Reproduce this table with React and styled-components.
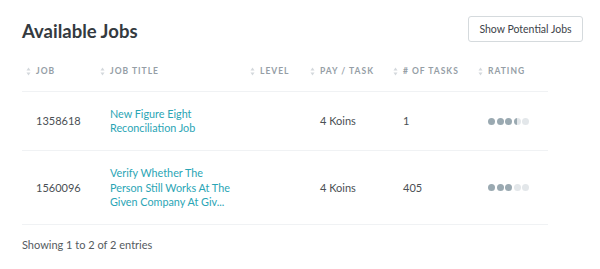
import React from 'react'
import styled, { createGlobalStyle } from 'styled-components'

const GlobalStyle = createGlobalStyle`
  body {
    margin: 0;
    background: #fff;
    font-family: Lato, "Open Sans", sans-serif;
  }
`

const jobs = [
  { id: '1358618', title: 'New Figure Eight Reconciliation Job', pay: '4 Koins', tasks: '1', rating: 3.5 },
  { id: '1560096', title: 'Verify Whether The Person Still Works At The Given Company At Giv...', pay: '4 Koins', tasks: '405', rating: 3 },
]

const columns = [
  { label: 'Job', width: 74 },
  { label: 'Job Title', width: 150 },
  { label: 'Level', width: 60 },
  { label: 'Pay / Task', width: 83 },
  { label: '# of Tasks', width: 85 },
  { label: 'Rating', width: 74 },
]

function SortIcon() {
  return (
    <svg width="5" height="9" viewBox="0 0 5 9">
      <path d="M2.5 0.5 L4.5 3.5 H0.5 Z" fill="#d3d8dc" />
      <path d="M2.5 8.5 L4.5 5.5 H0.5 Z" fill="#d3d8dc" />
    </svg>
  )
}

function Rating({ value }) {
  return (
    <Dots>
      {[0, 1, 2, 3, 4].map(i => {
        const fill = value - i >= 1 ? 'full' : value - i > 0 ? 'half' : 'empty'
        return <Dot key={i} $fill={fill} />
      })}
    </Dots>
  )
}

export default function App() {
  return (
    <>
      <GlobalStyle />
      <Page>
        <Header>
          <Title>Available Jobs</Title>
          <Button>Show Potential Jobs</Button>
        </Header>
        <Table>
          <colgroup>
            {columns.map(c => <col key={c.label} style={{ width: c.width }} />)}
          </colgroup>
          <thead>
            <tr>
              {columns.map(c => (
                <Th key={c.label}>
                  <ThInner>
                    <SortIcon />
                    {c.label}
                  </ThInner>
                </Th>
              ))}
            </tr>
          </thead>
          <tbody>
            {jobs.map(job => (
              <tr key={job.id}>
                <Td>{job.id}</Td>
                <Td><JobLink>{job.title}</JobLink></Td>
                <Td></Td>
                <Td>{job.pay}</Td>
                <Td>{job.tasks}</Td>
                <Td><Rating value={job.rating} /></Td>
              </tr>
            ))}
          </tbody>
        </Table>
        <Footer>Showing 1 to 2 of 2 entries</Footer>
      </Page>
    </>
  )
}

const Page = styled.div`
  padding: 16px 17px 0 22px;
  width: 600px;
  box-sizing: border-box;
`
const Header = styled.div`
  display: flex;
  justify-content: space-between;
  align-items: flex-start;
`
const Title = styled.h1`
  margin: 4px 0 0;
  font-size: 18.5px;
  font-weight: 700;
  color: #343a40;
  line-height: 22px;
`
const Button = styled.button`
  height: 26px;
  width: 115px;
  padding: 0;
  border: 1px solid #d5dadd;
  border-radius: 3px;
  background: #fff;
  font-family: Lato, sans-serif;
  font-size: 10.5px;
  color: #3d4349;
  cursor: pointer;
`
const Table = styled.table`
  margin-top: 22px;
  width: 526px;
  border-collapse: collapse;
  table-layout: fixed;
`
const Th = styled.th`
  padding: 2px 0 13px 4px;
  text-align: left;
  font-size: 8.5px;
  font-weight: 700;
  letter-spacing: 1px;
  text-transform: uppercase;
  color: #959ea6;
  border-bottom: 1px solid #f0f2f4;
`
const ThInner = styled.span`
  display: inline-flex;
  align-items: center;
  gap: 5px;
  white-space: nowrap;
`
const Td = styled.td`
  padding: 15px 2px 14.5px 14px;
  font-size: 11px;
  line-height: 14.5px;
  color: #4a4f54;
  vertical-align: middle;
  border-bottom: 1px solid #f0f2f4;
`
const JobLink = styled.a`
  display: block;
  max-width: 125px;
  font-size: 10.8px;
  color: #2aa5b5;
  cursor: pointer;
`
const Dots = styled.div`
  display: flex;
  gap: 1.5px;
`
const Dot = styled.span`
  width: 7px;
  height: 7px;
  border-radius: 50%;
  background: ${p =>
    p.$fill === 'full'
      ? '#9aa9b1'
      : p.$fill === 'half'
      ? 'linear-gradient(90deg, #9aa9b1 50%, #e3e7ea 50%)'
      : '#e3e7ea'};
`
const Footer = styled.div`
  margin-top: 13px;
  font-size: 11px;
  color: #555b61;
`
